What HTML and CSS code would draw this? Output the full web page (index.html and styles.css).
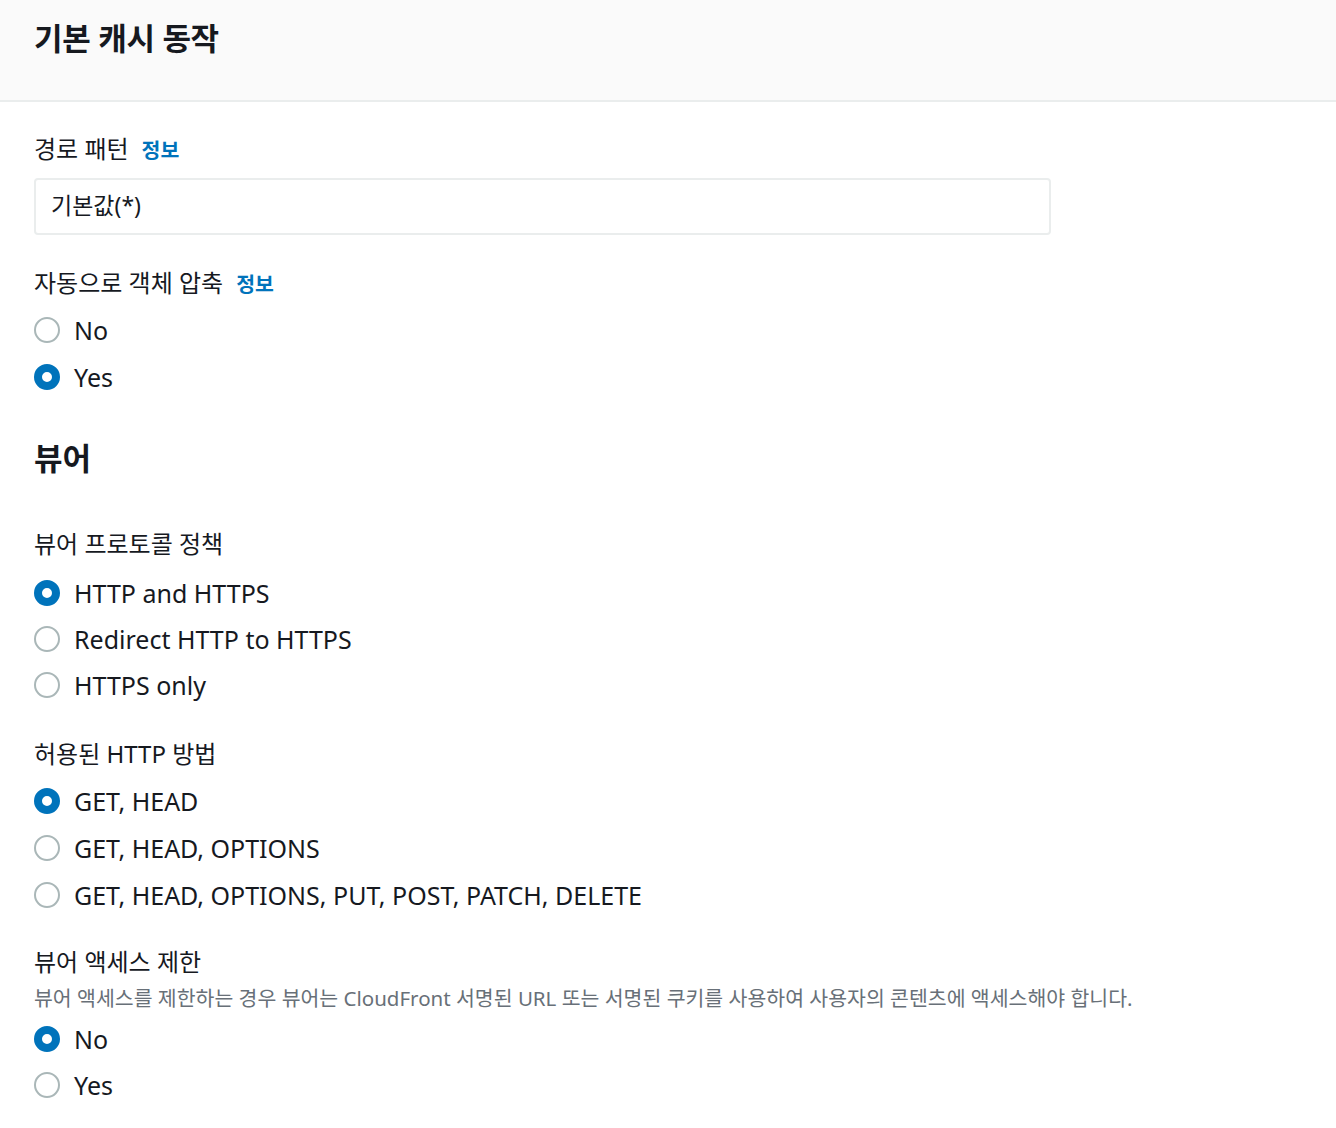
FILE: index.html
```html
<!DOCTYPE html>
<html lang="ko">
<head>
    <meta charset="UTF-8">
    <title>기본 캐시 동작</title>
    <link rel="stylesheet" href="styles.css">
</head>
<body>
    <div class="panel-header">
        <h1>기본 캐시 동작</h1>
    </div>

    <div class="panel-body">
        <div class="field field-first">
            <div class="field-label">경로 패턴<a href="#" class="info-link">정보</a></div>
            <div class="text-input">기본값(*)</div>
        </div>

        <div class="field field-compress">
            <div class="field-label">자동으로 객체 압축<a href="#" class="info-link">정보</a></div>
            <div class="radio-group">
                <label class="radio-row"><span class="radio"></span>No</label>
                <label class="radio-row"><span class="radio checked"></span>Yes</label>
            </div>
        </div>

        <h2>뷰어</h2>

        <div class="field field-protocol">
            <div class="field-label">뷰어 프로토콜 정책</div>
            <div class="radio-group tight">
                <label class="radio-row"><span class="radio checked"></span>HTTP and HTTPS</label>
                <label class="radio-row"><span class="radio"></span>Redirect HTTP to HTTPS</label>
                <label class="radio-row"><span class="radio"></span>HTTPS only</label>
            </div>
        </div>

        <div class="field field-methods">
            <div class="field-label">허용된 HTTP 방법</div>
            <div class="radio-group">
                <label class="radio-row"><span class="radio checked"></span>GET, HEAD</label>
                <label class="radio-row"><span class="radio"></span>GET, HEAD, OPTIONS</label>
                <label class="radio-row"><span class="radio"></span>GET, HEAD, OPTIONS, PUT, POST, PATCH, DELETE</label>
            </div>
        </div>

        <div class="field field-access">
            <div class="field-label">뷰어 액세스 제한</div>
            <div class="field-desc">뷰어 액세스를 제한하는 경우 뷰어는 CloudFront 서명된 URL 또는 서명된 쿠키를 사용하여 사용자의 콘텐츠에 액세스해야 합니다.</div>
            <div class="radio-group tight short">
                <label class="radio-row"><span class="radio checked"></span>No</label>
                <label class="radio-row"><span class="radio"></span>Yes</label>
            </div>
        </div>
    </div>
</body>
</html>
```

FILE: styles.css
```css
body {
    margin: 0;
    padding: 0;
    font-family: 'Noto Sans', 'Noto Sans CJK KR', sans-serif;
    color: #16191f;
    background: #fff;
}

.panel-header {
    background-color: #fafafa;
    height: 100px;
    border-bottom: 2px solid #eaeded;
    padding: 0 34px;
}

h1 {
    margin: 0;
    padding-top: 18px;
    font-size: 31px;
    line-height: 40px;
    font-weight: 700;
    letter-spacing: -0.3px;
}

.panel-body {
    padding: 0 34px;
}

h2 {
    margin: 38px 0 0;
    font-size: 31px;
    line-height: 40px;
    font-weight: 700;
}

.field-label {
    font-size: 24px;
    line-height: 30px;
}

.info-link {
    margin-left: 13px;
    color: #0073bb;
    font-size: 20.5px;
    line-height: 1;
    font-weight: 700;
    text-decoration: none;
}

.field-first { margin-top: 32px; }
.field-compress { margin-top: 33px; }
.field-protocol { margin-top: 51px; }
.field-methods { margin-top: 31px; }
.field-access { margin-top: 29px; }

.text-input {
    margin-top: 14px;
    width: 1017px;
    height: 57px;
    box-sizing: border-box;
    border: 2px solid #eaeded;
    border-radius: 4px;
    padding: 0 15px 5px;
    display: flex;
    align-items: center;
    font-size: 23px;
}

.field-desc {
    margin-top: 8px;
    font-size: 20.5px;
    line-height: 26px;
    color: #687078;
}

.radio-group {
    display: flex;
    flex-direction: column;
    margin-top: 8px;
}

.radio-group.tight { margin-top: 11px; }
.radio-group.short { margin-top: 5px; }

.radio-row {
    display: flex;
    align-items: center;
    height: 47px;
    font-size: 25px;
    gap: 14px;
}

.radio-group.tight .radio-row {
    height: 46px;
}

.radio {
    width: 26px;
    height: 26px;
    box-sizing: border-box;
    border: 2px solid #aab7b8;
    border-radius: 50%;
    background: #fff;
    flex-shrink: 0;
}

.radio.checked {
    border: 8px solid #0073bb;
}
```
